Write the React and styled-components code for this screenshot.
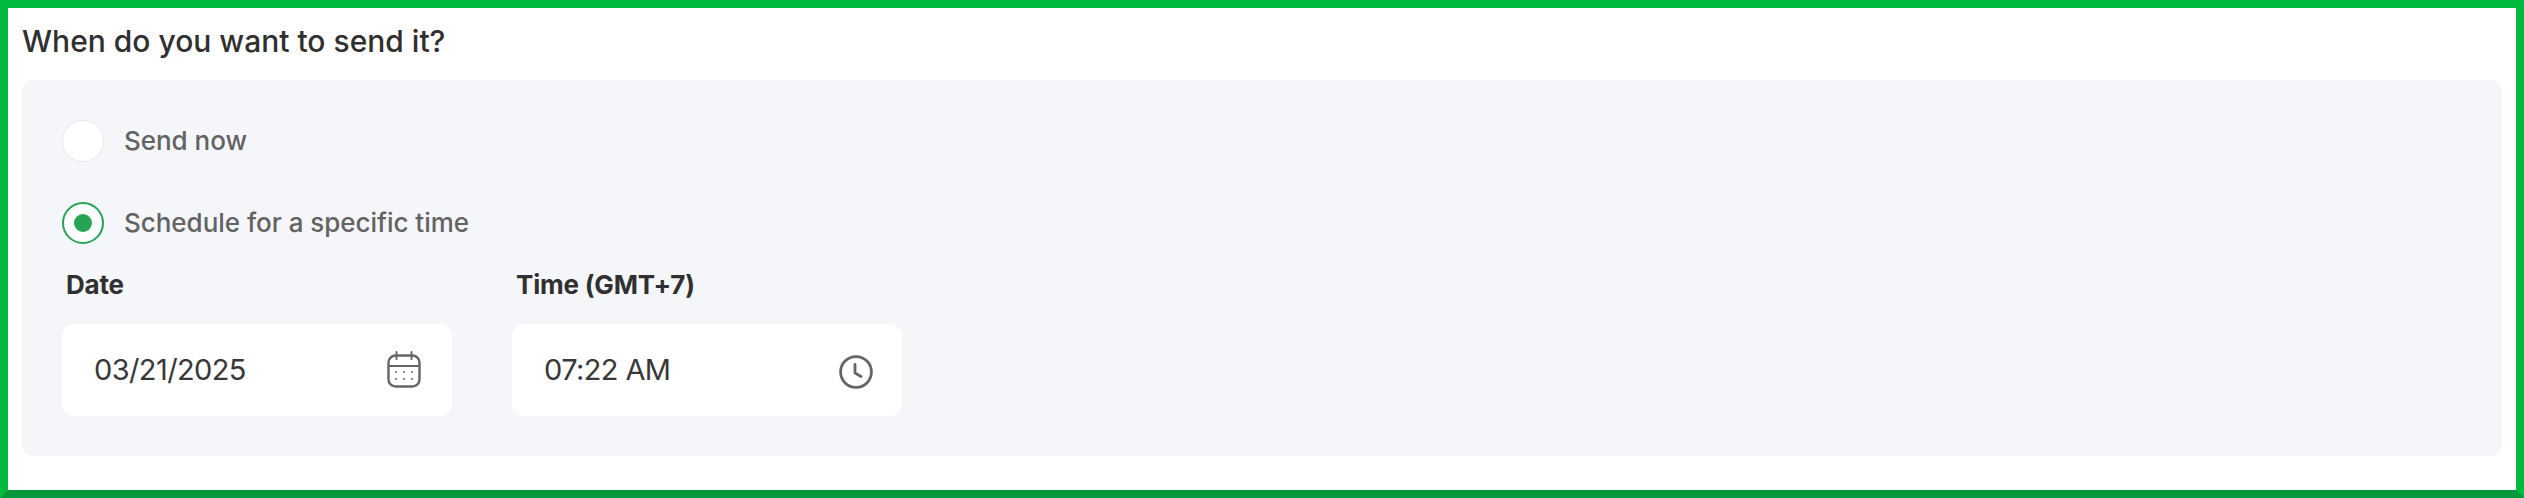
import React from 'react'
import styled, { createGlobalStyle } from 'styled-components'

const GlobalStyle = createGlobalStyle`
  html, body {
    margin: 0;
    padding: 0;
    background: #fff;
  }
  * {
    box-sizing: border-box;
  }
`

function CalendarIcon() {
  return (
    <svg width="36" height="38" viewBox="0 0 36 38" fill="none" stroke="#666" strokeWidth="2.4">
      <rect x="2.5" y="4.5" width="31" height="31" rx="7" />
      <path d="M2.5 15h31" strokeWidth="2" />
      <path d="M10.5 1v7M25.5 1v7" strokeWidth="2" strokeLinecap="round" />
      <g fill="#666" stroke="none">
        <circle cx="10" cy="21" r="1" />
        <circle cx="18" cy="21" r="1" />
        <circle cx="26" cy="21" r="1" />
        <circle cx="10" cy="28" r="1" />
        <circle cx="18" cy="28" r="1" />
        <circle cx="26" cy="28" r="1" />
      </g>
    </svg>
  )
}

function ClockIcon() {
  return (
    <ClockSvg width="34" height="34" viewBox="0 0 34 34" fill="none" stroke="#666" strokeWidth="2.8">
      <circle cx="17" cy="17" r="15.4" />
      <path d="M16 9.5v8.5l6 3.5" strokeLinecap="round" strokeLinejoin="round" />
    </ClockSvg>
  )
}

export default function App() {
  return (
    <>
      <GlobalStyle />
      <Frame>
        <Heading>When do you want to send it?</Heading>
        <Panel>
          <RadioRow>
            <Radio />
            <RadioLabel>Send now</RadioLabel>
          </RadioRow>
          <RadioRow>
            <Radio $checked />
            <RadioLabel>Schedule for a specific time</RadioLabel>
          </RadioRow>
          <Fields>
            <Field>
              <FieldLabel>Date</FieldLabel>
              <InputBox>
                <InputValue>03/21/2025</InputValue>
                <CalendarIcon />
              </InputBox>
            </Field>
            <Field>
              <FieldLabel>Time (GMT+7)</FieldLabel>
              <InputBox>
                <InputValue>07:22 AM</InputValue>
                <ClockIcon />
              </InputBox>
            </Field>
          </Fields>
        </Panel>
      </Frame>
    </>
  )
}

const Frame = styled.div`
  width: 2524px;
  height: 498px;
  border: 8px solid #00ba40;
  border-bottom-color: #03993a;
  background: #fff;
  padding: 14px 14px 34px 14px;
  display: flex;
  flex-direction: column;
  font-family: Inter, 'Liberation Sans', sans-serif;
`

const Heading = styled.h2`
  margin: 0 0 20px 0;
  height: 38px;
  font-size: 30px;
  line-height: 38px;
  font-weight: 500;
  color: #303030;
`

const Panel = styled.div`
  flex: 1;
  background: #f5f6fa;
  border-radius: 10px;
  padding: 40px;
  display: flex;
  flex-direction: column;
`

const RadioRow = styled.div`
  display: flex;
  align-items: center;
  gap: 20px;
  height: 42px;
  margin-bottom: 40px;
  &:nth-child(2) {
    margin-bottom: 24px;
  }
`

const Radio = styled.span`
  width: 42px;
  height: 42px;
  border-radius: 50%;
  background: #fff;
  border: ${(p) => (p.$checked ? '2px solid #26a455' : '1px solid #e6e7eb')};
  display: flex;
  align-items: center;
  justify-content: center;
  &::after {
    content: '';
    display: ${(p) => (p.$checked ? 'block' : 'none')};
    width: 18px;
    height: 18px;
    border-radius: 50%;
    background: #26a455;
  }
`

const RadioLabel = styled.span`
  font-size: 26px;
  line-height: 34px;
  letter-spacing: -0.03px;
  color: #636363;
  font-weight: 500;
`

const Fields = styled.div`
  display: flex;
  gap: 60px;
`

const Field = styled.div`
  display: flex;
  flex-direction: column;
  width: 390px;
`

const FieldLabel = styled.label`
  font-size: 26px;
  line-height: 34px;
  font-weight: 700;
  letter-spacing: -0.2px;
  color: #303030;
  padding-left: 4px;
  margin-bottom: 22px;
`

const InputBox = styled.div`
  height: 92px;
  background: #fff;
  border-radius: 12px;
  padding: 0 30px 0 32px;
  display: flex;
  align-items: center;
  justify-content: space-between;
`

const InputValue = styled.span`
  font-size: 29px;
  line-height: 38px;
  letter-spacing: -0.6px;
  color: #383838;
`

const ClockSvg = styled.svg`
  margin: 4px -1px 0 0;
`
